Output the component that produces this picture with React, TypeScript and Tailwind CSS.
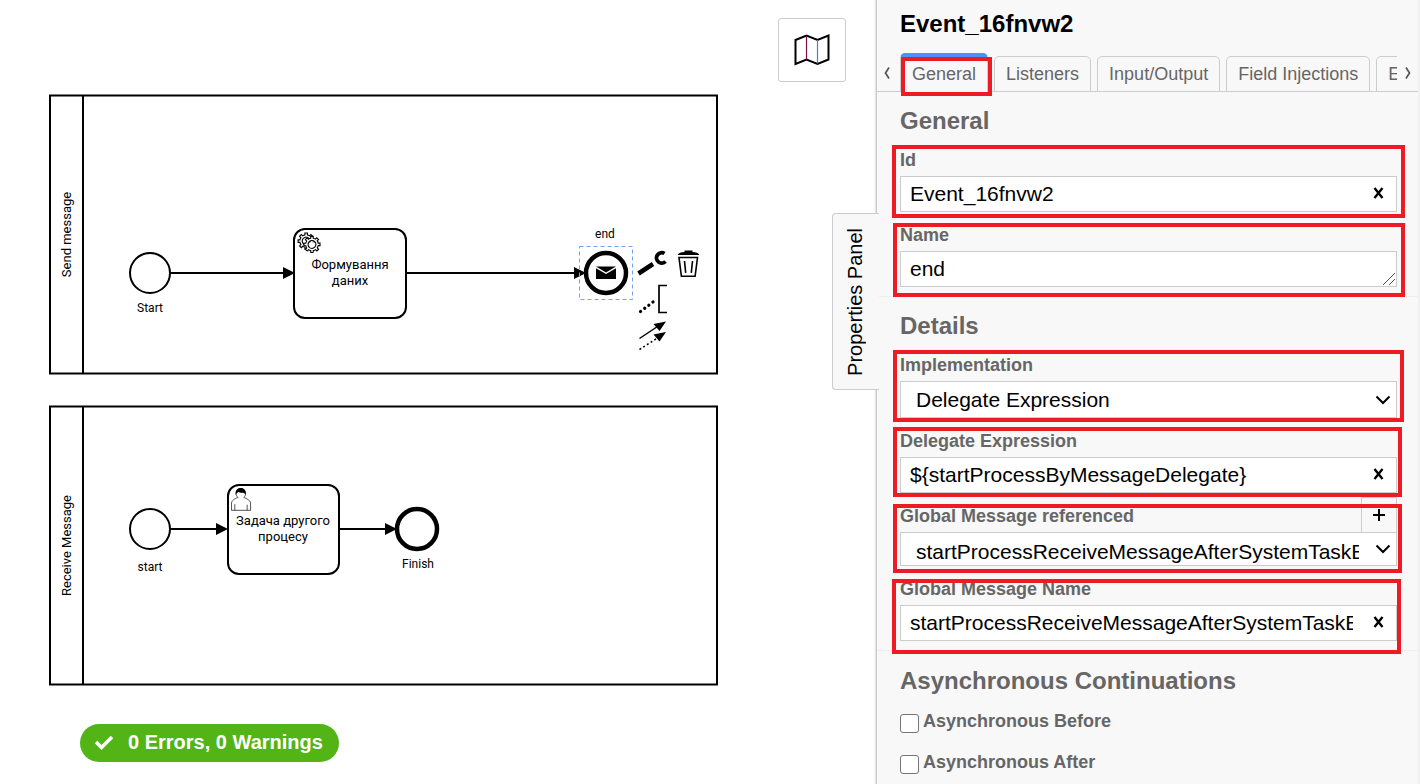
import React, { useState } from "react";

const GEAR =
  "v -1.71335 c 0.352326,-0.0705 0.703932,-0.17838 1.047628,-0.32133 0.344416,-0.14465 0.665822,-0.32133 0.966377,-0.52145 l 1.19431,1.18005 1.567487,-1.57688 -1.195028,-1.18014 c 0.403376,-0.61394 0.683079,-1.29908 0.825447,-2.01824 l 1.622133,-0.01 v -2.2196 l -1.636514,0.01 c -0.07333,-0.35153 -0.178319,-0.70024 -0.323564,-1.04372 -0.145244,-0.34406 -0.321407,-0.6644 -0.522735,-0.96217 l 1.131035,-1.13631 -1.583305,-1.56293 -1.129598,1.13589 c -0.614052,-0.40108 -1.302883,-0.68093 -2.022633,-0.82247 l 0.0093,-1.61852 h -2.241173 l 0.0042,1.63124 c -0.353763,0.0736 -0.705369,0.17977 -1.049785,0.32371 -0.344415,0.14437 -0.665102,0.32092 -0.9635006,0.52006 l -1.1698628,-1.15823 -1.5667691,1.5792 1.1684265,1.15669 c -0.4026573,0.61283 -0.68308,1.29797 -0.8247287,2.01713 l -1.6588041,0.003 v 2.22174 l 1.6724648,-0.006 c 0.073327,0.35077 0.1797598,0.70243 0.3242851,1.04472 0.1452428,0.34448 0.3214064,0.6644 0.5227339,0.96066 l -1.1993431,1.19723 1.5840256,1.56011 1.1964668,-1.19348 c 0.6140517,0.40346 1.3028827,0.68232 2.0233517,0.82331 l 7.19e-4,1.69892 h 2.226848 z m 0.221462,-3.9957 c -1.788948,0.7502 -3.8576,-0.0928 -4.6097055,-1.87438 -0.7521065,-1.78321 0.090598,-3.84627 1.8802645,-4.59604 1.78823,-0.74936 3.856881,0.0929 4.608987,1.87437 0.752106,1.78165 -0.0906,3.84612 -1.879546,4.59605 z";

const PERSON =
  "m 15,12 c 0.909,-0.845 1.594,-2.049 1.594,-3.385 0,-2.554 -1.805,-4.622 -4.357,-4.622 -2.552,0 -4.288,2.068 -4.288,4.622 0,1.348 0.974,2.562 1.896,3.405 -0.529,0.187 -5.669,2.097 -5.794,4.756 v 6.718 h 17 v -6.718 c 0,-2.298 -5.528,-4.595 -6.051,-4.776 z m -8,6 l 0,5.5 m 11,0 l 0,-5";

type FlowProps = { from: number; to: number; y: number };

function SequenceFlow({ from, to, y }: FlowProps) {
  return (
    <g>
      <line x1={from} y1={y} x2={to - 8} y2={y} stroke="#000" strokeWidth="2" />
      <path d={`M${to - 11} ${y - 6} L${to + 1} ${y} L${to - 11} ${y + 6} Z`} />
    </g>
  );
}

function Pool({ y, name }: { y: number; name: string }) {
  return (
    <g>
      <rect x="50" y={y} width="667" height="278" fill="#fff" stroke="#000" strokeWidth="2" />
      <line x1="83" y1={y} x2="83" y2={y + 278} stroke="#000" strokeWidth="2" />
      <text transform={`translate(71 ${y + 139}) rotate(-90)`} textAnchor="middle">
        {name}
      </text>
    </g>
  );
}

function Diagram() {
  return (
    <svg
      className="block h-full w-full font-[Roboto,'Liberation_Sans',sans-serif] text-[13px]"
      role="img"
      aria-label="BPMN diagram"
    >
      <Pool y={95.5} name="Send message" />
      <Pool y={406.5} name="Receive Message" />

      <g fill="#fff" stroke="#000" strokeWidth="2">
        <circle cx="150" cy="273" r="20" />
        <circle cx="150" cy="529" r="20" />
        <rect x="294" y="229" width="112" height="89" rx="11" />
        <rect x="228" y="485" width="111" height="89" rx="11" />
      </g>
      <g fill="#fff" stroke="#000" strokeWidth="4.5">
        <circle cx="606" cy="273" r="20" />
        <circle cx="417" cy="529" r="20" />
      </g>

      <SequenceFlow from={171} to={294} y={273} />
      <SequenceFlow from={407} to={585} y={273} />
      <SequenceFlow from={171} to={227} y={529} />
      <SequenceFlow from={340} to={396} y={529} />

      <g textAnchor="middle" className="text-[12px]">
        <text x="150" y="312">Start</text>
        <text x="150" y="571">start</text>
        <text x="605" y="238">end</text>
        <text x="418" y="568">Finish</text>
      </g>
      <g textAnchor="middle">
        <text x="350" y="269">Формування</text>
        <text x="350" y="285">даних</text>
        <text x="283" y="525">Задача другого</text>
        <text x="283" y="541">процесу</text>
      </g>

      <g transform="translate(294 229) scale(1.12)" fill="#fff" stroke="#000" strokeWidth="1">
        <path d={"m 12,18 " + GEAR} />
        <circle cx="16" cy="16.5" r="5" stroke="none" />
        <path d={"m 17.2,21 " + GEAR} />
      </g>

      <g transform="translate(227 484) scale(1.12)">
        <path d={PERSON} fill="#fff" stroke="#000" strokeWidth="0.6" />
        <path d="M8 9.6C7.2 6 9.2 3.6 12.2 3.6s5.200 2.400 4.400 6c-.6-1.200-1.600-1.800-2.600-1.800-1.400.4-3-.3-3.700-.6C9.300 7.600 8.700 8.500 8 9.600Z" />
      </g>

      <rect x="579.500" y="246.500" width="53" height="53" fill="none" stroke="#6ea3f7" strokeDasharray="4 3" />
      <path d="M596 266.500h20l-10 6z M596 268.300l10 5.700 10-5.700v10.700h-20z" />

      <path d="M638.500 273.500 653 264" stroke="#000" strokeWidth="4.500" />
      <path d="M664.500 253.500A5.200 5.200 0 1 0 665.500 261.500" fill="none" stroke="#000" strokeWidth="3.800" />

      <g fill="none" stroke="#000">
        <path d="M679 257.500h18.500l-2.400 18.800h-13.700z" strokeWidth="1.600" />
        <path d="M684.500 261l1.200 11.800M692.500 261l-1.200 11.800" strokeWidth="1.600" />
      </g>
      <path d="M677.500 255c1-2 3.500-2.600 7-2.900v-1.600h8v1.600c3.500.3 6 .9 7 2.900z" />

      <path d="M667 285.500h-8v27h8" fill="none" stroke="#000" strokeWidth="1.700" />
      <path d="M640.500 311.500 657 299" stroke="#000" strokeWidth="3.200" strokeDasharray="0.100 5.100" strokeLinecap="round" />

      <path d="M639.500 338.500 659 325.500" stroke="#000" strokeWidth="1.500" />
      <path d="M666 321.500l-6.500 9.500-6-7z" />
      <path d="M639.500 349.500 659 337" stroke="#000" strokeWidth="1.500" strokeDasharray="2 2.400" />
      <path d="M666 332l-6.500 9.500-6-7z" />
    </svg>
  );
}

function Chevron() {
  return (
    <svg className="pointer-events-none absolute right-[6px] top-1/2 h-3 w-4 -translate-y-1/2" viewBox="0 0 16 12" aria-hidden="true">
      <path d="M1.500 2.500 8 9 14.500 2.500" fill="none" stroke="#000" strokeWidth="2" />
    </svg>
  );
}

function Cross() {
  return (
    <svg className="h-3 w-3" viewBox="0 0 12 12" aria-hidden="true">
      <path d="M1.500 1 9.500 11M9.500 1 1.500 11" fill="none" stroke="#000" strokeWidth="2.400" />
    </svg>
  );
}

type FieldProps = {
  id: string;
  label: string;
  frame: string;
  action?: React.ReactNode;
  children: React.ReactNode;
};

function Field({ id, label, frame, action, children }: FieldProps) {
  return (
    <div className="relative">
      <label htmlFor={id} className="mb-1 block text-[18px] leading-6 font-bold text-[#666]">
        {label}
      </label>
      {action}
      <div className="relative">{children}</div>
      <span aria-hidden="true" className={"pointer-events-none absolute border-4 border-[#ed1c24] " + frame} />
    </div>
  );
}

const box = "block w-full border border-[#ccc] bg-white text-[21px] text-black outline-none";

function TextField(props: { id: string; label: string; value: string; frame: string }) {
  const [value, setValue] = useState(props.value);
  return (
    <Field id={props.id} label={props.label} frame={props.frame}>
      <input
        id={props.id}
        className={box + " h-9 pr-[43px] pl-[9px]"}
        value={value}
        onChange={(e) => setValue(e.target.value)}
      />
      <button
        type="button"
        aria-label={"Clear " + props.label}
        onClick={() => setValue("")}
        className="absolute top-0 right-0 flex h-[34px] w-9 items-center justify-center"
      >
        <Cross />
      </button>
    </Field>
  );
}

function Heading({ children }: { children: React.ReactNode }) {
  return <h2 className="text-[24px] leading-8 font-bold text-[#666]">{children}</h2>;
}

function CheckRow({ label }: { label: string }) {
  return (
    <label className="flex items-start gap-1 text-[18px] leading-6 font-bold text-[#666]">
      <input
        type="checkbox"
        className="mt-[5px] size-[19px] shrink-0 appearance-none rounded-[3px] border border-[#767676] bg-white checked:bg-[#4d90ff]"
      />
      {label}
    </label>
  );
}

const tabs = ["General", "Listeners", "Input/Output", "Field Injections", "Extensions"];

function Tabs() {
  const [active, setActive] = useState("General");
  return (
    <div className="flex h-10 items-end border-b border-[#ccc] text-[18px] text-[#666]">
      <button type="button" aria-label="Previous tabs" className="flex h-9 w-[23px] items-center justify-center pr-1">
        <svg className="h-3 w-2" viewBox="0 0 8 12" aria-hidden="true">
          <path d="M6 0.500 2.500 6 6 11.500" fill="none" stroke="#555" strokeWidth="1.700" />
        </svg>
      </button>
      <div role="tablist" className="-mb-px flex min-w-0 flex-1 items-end gap-[6px] overflow-x-clip">
        {tabs.map((tab) => (
          <div key={tab} className="relative shrink-0">
            <button
              type="button"
              role="tab"
              aria-selected={tab === active}
              onClick={() => setActive(tab)}
              className={
                tab === active
                  ? "block h-[39px] rounded-t-[5px] border-x border-t-4 border-x-[#ccc] border-t-[#4d90ff] bg-[#f8f8f8] px-[11px] pb-px leading-[34px]"
                  : "block h-9 rounded-t-[5px] border border-[#ccc] px-[11px] leading-[34px]"
              }
            >
              {tab}
            </button>
            {tab === "General" && (
              <span
                aria-hidden="true"
                className="pointer-events-none absolute top-1 -right-1 -bottom-1 left-px border-4 border-[#ed1c24]"
              />
            )}
          </div>
        ))}
      </div>
      <button type="button" aria-label="Next tabs" className="flex h-9 w-[21px] items-center justify-center">
        <svg className="h-3 w-2" viewBox="0 0 8 12" aria-hidden="true">
          <path d="M2 0.500 5.500 6 2 11.500" fill="none" stroke="#555" strokeWidth="1.700" />
        </svg>
      </button>
    </div>
  );
}

function PropertiesPanel() {
  return (
    <aside className="relative w-[544px] shrink-0 border-l border-[#ccc] bg-[#f8f8f8] shadow-[0_0_2px_#aaa]">
      <button
        type="button"
        className="absolute top-[213px] -left-[45px] flex h-[177px] w-[47px] items-center justify-center rounded-l-[4px] border border-r-0 border-[#ccc] bg-[#f8f8f8] pr-[3px] text-[20px] text-black"
      >
        <span className="rotate-180 [writing-mode:vertical-rl]">Properties Panel</span>
      </button>

      <div className="h-full overflow-hidden border-r-2 border-[#f0f0f0]">
        <h1 className="px-[23px] pt-2 text-[24px] leading-8 font-bold text-black">Event_16fnvw2</h1>
        <div className="mt-3">
          <Tabs />
        </div>

        <section className="flex flex-col gap-[11px] border-b border-[#eee] pt-[13px] pr-[21px] pb-[9px] pl-[23px]">
          <Heading>General</Heading>
          <TextField id="id" label="Id" value="Event_16fnvw2" frame="-top-[3px] -bottom-[6px] -left-[8px] -right-[8px]" />
          <Field id="name" label="Name" frame="top-0 -bottom-[10px] -left-[7px] -right-[8px]">
            <textarea id="name" rows={1} defaultValue="end" className={box + " h-9 resize-none overflow-hidden px-[9px] leading-[34px]"} />
            <svg className="pointer-events-none absolute right-[2px] bottom-[2px] h-3 w-3" viewBox="0 0 12 12" aria-hidden="true">
              <path d="M0 12 12 0M6 12 12 6" stroke="#555" strokeWidth="1" />
            </svg>
          </Field>
        </section>

        <section className="flex flex-col gap-[11px] border-b border-[#eee] pt-[13px] pr-[21px] pb-[9px] pl-[23px]">
          <Heading>Details</Heading>
          <Field id="implementation" label="Implementation" frame="-top-[3px] -bottom-[4px] -left-[7px] -right-[7px]">
            <select id="implementation" className={box + " h-[37px] appearance-none pr-[37px] pl-[15px]"}>
              <option>Delegate Expression</option>
            </select>
            <Chevron />
          </Field>
          <TextField
            id="delegate"
            label="Delegate Expression"
            value="${startProcessByMessageDelegate}"
            frame="-top-[2px] -bottom-[4px] -left-[7px] -right-[5px]"
          />
          <Field
            id="message-ref"
            label="Global Message referenced"
            frame="top-0 -bottom-[7px] -left-[7px] -right-[5px]"
            action={
              <button
                type="button"
                aria-label="Add message"
                className="absolute -top-[7px] right-0 flex h-9 w-9 items-center justify-center border border-[#ccc]"
              >
                <svg className="h-3 w-3" viewBox="0 0 12 12" aria-hidden="true">
                  <path d="M0 6H12M6 0V12" stroke="#000" strokeWidth="2" />
                </svg>
              </button>
            }
          >
            <select id="message-ref" className={box + " h-[34px] appearance-none pt-[3px] pr-[37px] pl-[15px]"}>
              <option>startProcessReceiveMessageAfterSystemTaskEnd</option>
            </select>
            <Chevron />
          </Field>
          <TextField
            id="message-name"
            label="Global Message Name"
            value="startProcessReceiveMessageAfterSystemTaskEnd"
            frame="top-[2px] -bottom-[13px] -left-[8px] -right-[4px]"
          />
        </section>

        <section className="pt-[14px] pr-[21px] pl-[23px]">
          <Heading>Asynchronous Continuations</Heading>
          <div className="mt-3 flex flex-col gap-[17px]">
            <CheckRow label="Asynchronous Before" />
            <CheckRow label="Asynchronous After" />
          </div>
        </section>
      </div>
    </aside>
  );
}

export default function App() {
  return (
    <div className="flex h-screen overflow-hidden bg-white font-['Liberation_Sans',Arial,sans-serif]">
      <main className="relative min-w-0 flex-1">
        <Diagram />
        <button
          type="button"
          aria-label="Toggle minimap"
          className="absolute top-[18px] right-[30px] flex h-16 w-[68px] items-center justify-center rounded-[3px] border border-[#ccc] bg-white"
        >
          <svg className="h-8 w-9" viewBox="0 0 36 32" fill="none" aria-hidden="true">
            <path d="M1.500 6 12.500 1.500 23.500 6 34.500 1.500V25.500L23.500 30 12.500 25.500 1.500 30Z" stroke="#000" strokeWidth="2" />
            <path d="M12.500 2V25.500" stroke="#7a0f4a" strokeWidth="1.200" />
            <path d="M23.500 6V29.500" stroke="#5577c9" strokeWidth="1.200" />
          </svg>
        </button>
        <button
          type="button"
          className="absolute bottom-[22px] left-20 flex h-[38px] items-center gap-[14px] rounded-full bg-[#52b415] px-4 pb-[2px] pl-[14px] text-[20px] font-bold text-white"
        >
          <svg className="h-4 w-5" viewBox="0 0 20 16" fill="none" aria-hidden="true">
            <path d="M2 8 7.500 13.500 18 3" stroke="#fff" strokeWidth="3.500" />
          </svg>
          0 Errors, 0 Warnings
        </button>
      </main>
      <PropertiesPanel />
    </div>
  );
}
